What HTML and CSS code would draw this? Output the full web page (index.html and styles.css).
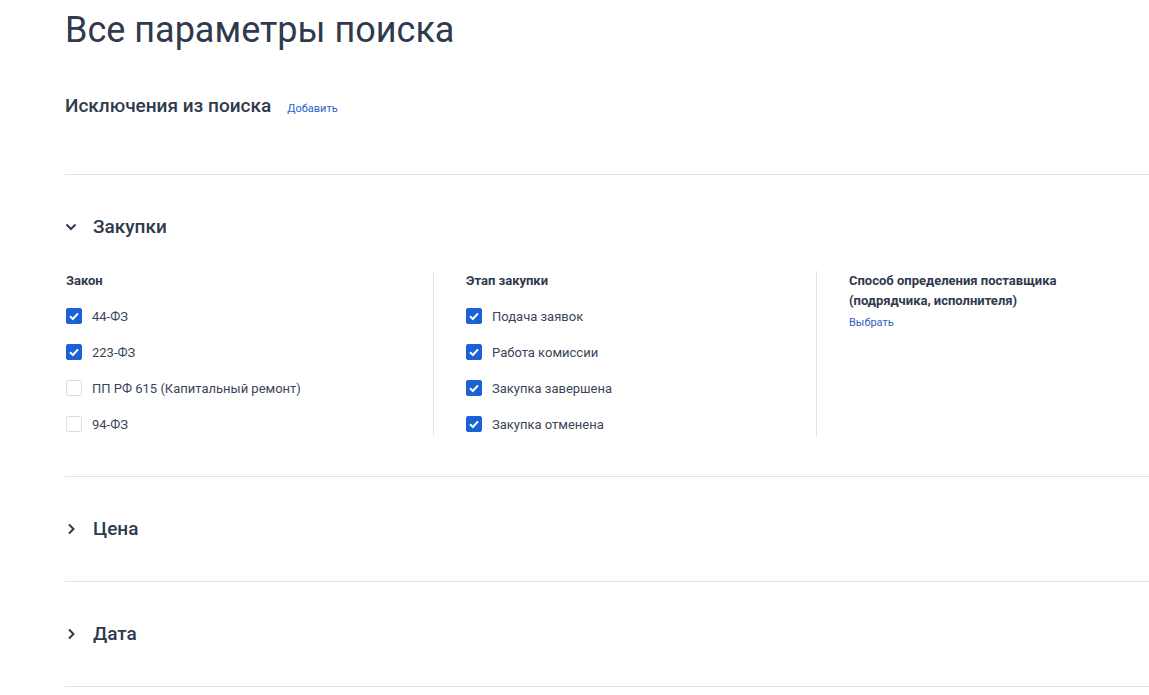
FILE: index.html
```html
<!DOCTYPE html>
<html lang="ru">
<head>
<meta charset="utf-8">
<title>Все параметры поиска</title>
<link rel="stylesheet" href="styles.css">
</head>
<body>
<div class="page">
  <h1 class="title">Все параметры поиска</h1>

  <section class="block block-exclusions">
    <div class="exclusions-head">
      <h2 class="block-title">Исключения из поиска</h2>
      <a class="link" href="#">Добавить</a>
    </div>
  </section>

  <section class="block block-open">
    <div class="block-head">
      <svg class="chev" width="12" height="12" viewBox="0 0 12 12"><path d="M1.5 3.5 L6 8 L10.5 3.5" fill="none" stroke="#2f3a4d" stroke-width="2"/></svg>
      <h2 class="block-title">Закупки</h2>
    </div>
    <div class="cols">
      <div class="col col-first">
        <div class="col-title">Закон</div>
        <ul class="checks">
          <li class="check"><span class="box on"><svg width="16" height="16" viewBox="0 0 16 16"><path d="M4 8.2 L6.9 11 L12 5.4" fill="none" stroke="#fff" stroke-width="2"/></svg></span>44-ФЗ</li>
          <li class="check"><span class="box on"><svg width="16" height="16" viewBox="0 0 16 16"><path d="M4 8.2 L6.9 11 L12 5.4" fill="none" stroke="#fff" stroke-width="2"/></svg></span>223-ФЗ</li>
          <li class="check"><span class="box"></span>ПП РФ 615 (Капитальный ремонт)</li>
          <li class="check"><span class="box"></span>94-ФЗ</li>
        </ul>
      </div>
      <div class="col">
        <div class="col-title">Этап закупки</div>
        <ul class="checks">
          <li class="check"><span class="box on"><svg width="16" height="16" viewBox="0 0 16 16"><path d="M4 8.2 L6.9 11 L12 5.4" fill="none" stroke="#fff" stroke-width="2"/></svg></span>Подача заявок</li>
          <li class="check"><span class="box on"><svg width="16" height="16" viewBox="0 0 16 16"><path d="M4 8.2 L6.9 11 L12 5.4" fill="none" stroke="#fff" stroke-width="2"/></svg></span>Работа комиссии</li>
          <li class="check"><span class="box on"><svg width="16" height="16" viewBox="0 0 16 16"><path d="M4 8.2 L6.9 11 L12 5.4" fill="none" stroke="#fff" stroke-width="2"/></svg></span>Закупка завершена</li>
          <li class="check"><span class="box on"><svg width="16" height="16" viewBox="0 0 16 16"><path d="M4 8.2 L6.9 11 L12 5.4" fill="none" stroke="#fff" stroke-width="2"/></svg></span>Закупка отменена</li>
        </ul>
      </div>
      <div class="col">
        <div class="col-title">Способ определения поставщика<br>(подрядчика, исполнителя)</div>
        <a class="link link-choose" href="#">Выбрать</a>
      </div>
    </div>
  </section>

  <section class="block">
    <div class="block-head">
      <svg class="chev" width="12" height="12" viewBox="0 0 12 12"><path d="M4 1.5 L8.5 6 L4 10.5" fill="none" stroke="#2f3a4d" stroke-width="2"/></svg>
      <h2 class="block-title">Цена</h2>
    </div>
  </section>

  <section class="block">
    <div class="block-head">
      <svg class="chev" width="12" height="12" viewBox="0 0 12 12"><path d="M4 1.5 L8.5 6 L4 10.5" fill="none" stroke="#2f3a4d" stroke-width="2"/></svg>
      <h2 class="block-title">Дата</h2>
    </div>
  </section>
</div>
</body>
</html>
```

FILE: styles.css
```css
* { box-sizing: border-box; }
html, body { margin: 0; padding: 0; background: #fff; }
body {
  font-family: Roboto, "Noto Sans", Arial, sans-serif;
  color: #2f3a4d;
}
.page {
  padding-left: 65px;
}
.title {
  margin: 0;
  padding-top: 6px;
  font-size: 36px;
  line-height: 48px;
  font-weight: 400;
  color: #2f3a4d;
}
.block {
  border-bottom: 1px solid #e2e2ea;
}
.block-exclusions {
  margin-top: 40px;
  padding-bottom: 56px;
}
.exclusions-head {
  display: flex;
  align-items: baseline;
  gap: 16px;
}
.block-title {
  margin: 0;
  font-size: 19px;
  line-height: 24px;
  font-weight: 500;
  color: #2f3a4d;
}
.link {
  font-size: 11px;
  line-height: 16px;
  color: #2c62c8;
  text-decoration: none;
}
.block-head {
  display: flex;
  align-items: center;
  padding: 40px 0 40px;
}
.chev {
  margin-right: 16px;
  flex: none;
}
.block-open .block-head {
  padding: 40px 0 32px;
}
.block-open {
  padding-bottom: 40px;
}
.cols {
  display: grid;
  grid-template-columns: 368px 383px 1fr;
}
.col {
  border-left: 1px solid #e2e2ea;
  padding-left: 32px;
  padding-bottom: 4px;
}
.col-first {
  border-left: none;
  padding-left: 1px;
}
.col-title {
  font-size: 13px;
  line-height: 20px;
  font-weight: 700;
  color: #2f3a4d;
}
.checks {
  list-style: none;
  margin: 17px 0 0;
  padding: 0;
  display: flex;
  flex-direction: column;
  gap: 20px;
}
.check {
  display: flex;
  align-items: center;
  height: 16px;
  font-size: 13px;
  color: #3a4558;
}
.box {
  width: 16px;
  height: 16px;
  border: 1px solid #dcdde3;
  border-radius: 2px;
  margin-right: 10px;
  flex: none;
  display: flex;
}
.box.on {
  background: #1a62d6;
  border-color: #1a62d6;
}
.box.on svg {
  margin: -1px;
}
.link-choose {
  display: block;
  margin-top: 4px;
}
```
